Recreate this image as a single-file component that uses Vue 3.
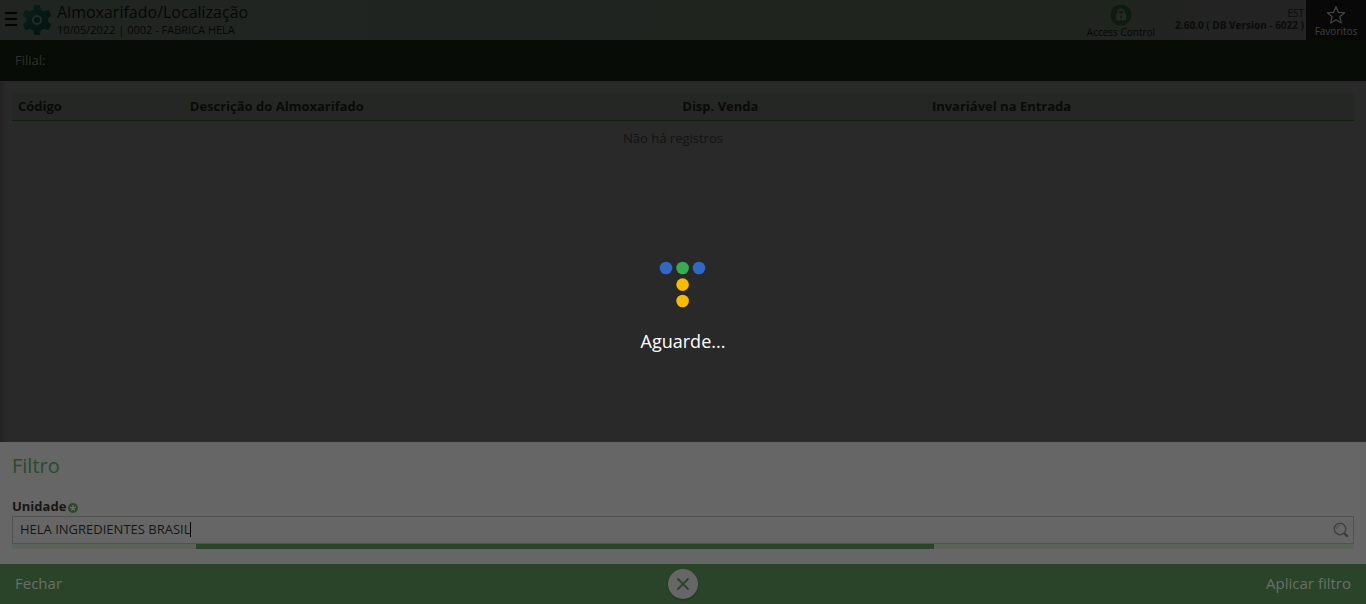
<script setup>
import { ref } from 'vue'

const unit = ref('HELA INGREDIENTES BRASIL')
const columns = [
  { label: 'Código', name: 'code' },
  { label: 'Descrição do Almoxarifado', name: 'description' },
  { label: 'Disp. Venda', name: 'sale' },
  { label: 'Invariável na Entrada', name: 'entry' }
]
</script>

<template>
  <div class="screen">
    <header class="topbar">
      <button class="menu" aria-label="Menu"><i></i><i></i><i></i></button>
      <svg class="gear" viewBox="0 0 28 32" aria-hidden="true">
        <defs>
          <linearGradient id="gearFill" x1="0" y1="0" x2="1" y2="1">
            <stop offset="0" stop-color="#0b1f1a" />
            <stop offset="1" stop-color="#021210" />
          </linearGradient>
        </defs>
        <path
          fill="url(#gearFill)"
          stroke="url(#gearFill)"
          stroke-width="2"
          stroke-linejoin="round"
          d="M12 2h4l1 4 4 2.500 4-1.500 2 4-3 3v4l3 3-2 4-4-1.500-4 2.500-1 4h-4l-1-4-4-2.500-4 1.500-2-4 3-3v-4l-3-3 2-4 4 1.500 4-2.500z"
        />
        <circle cx="14" cy="16" r="4" fill="#061613" stroke="#1f2c28" stroke-width="2" />
      </svg>
      <div class="heading">
        <h1>Almoxarifado/Localização</h1>
        <p>10/05/2022 | 0002 - FABRICA HELA</p>
      </div>
      <button class="access">
        <svg viewBox="0 0 22 22" aria-hidden="true">
          <circle cx="11" cy="11" r="10.500" fill="#0e1c0e" />
          <path d="M8 10V8.500a3 3 0 0 1 6 0V10" fill="none" stroke="#242924" stroke-width="1.800" />
          <rect x="6" y="9.500" width="10" height="7" rx="1" fill="#242924" />
          <path d="M11 11.500v3" stroke="#0e1c0e" stroke-width="1.500" />
        </svg>
        <span>Access Control</span>
      </button>
      <div class="version">
        <span>EST</span>
        <strong>2.60.0 ( DB Version - 6022 )</strong>
      </div>
      <button class="favorites">
        <svg viewBox="0 0 20 20" aria-hidden="true">
          <path
            d="M10 1.500l2.400 5.800 6.100.4-4.700 4 1.500 6.300L10 14.700 4.700 18l1.500-6.300-4.700-4 6.100-.4z"
            fill="none"
            stroke="#454545"
            stroke-width="1.200"
            stroke-linejoin="round"
          />
        </svg>
        <span>Favoritos</span>
      </button>
    </header>

    <div class="branch">Filial:</div>

    <main class="content">
      <table>
        <thead>
          <tr>
            <th v-for="c in columns" :key="c.name" :class="c.name" scope="col">{{ c.label }}</th>
          </tr>
        </thead>
        <tbody>
          <tr>
            <td :colspan="columns.length">Não há registros</td>
          </tr>
        </tbody>
      </table>
    </main>

    <section class="filter">
      <h2>Filtro</h2>
      <label for="unit">
        Unidade
        <svg viewBox="0 0 10 10" aria-hidden="true">
          <circle cx="5" cy="5" r="5" fill="#2a4a29" />
          <path d="M5 5V2M5 5l2.900-.9M5 5l1.800 2.400M5 5L3.200 7.400M5 5l-2.900-.9" stroke="#6a6f6a" stroke-width="1.300" />
        </svg>
      </label>
      <div class="field">
        <input id="unit" v-model="unit" type="text" autocomplete="off" />
        <span class="caret"></span>
        <button class="search" aria-label="Pesquisar">
          <svg viewBox="0 0 16 16" aria-hidden="true">
            <circle cx="7" cy="7" r="5.800" fill="none" stroke="#414141" stroke-width="1.400" />
            <path d="M3.600 7A3.400 3.400 0 0 1 7 3.600" fill="none" stroke="#494949" />
            <path d="M11.200 11.200l3.600 3.600" stroke="#393939" stroke-width="2" />
          </svg>
        </button>
      </div>
      <div class="progress"><div class="bar"></div></div>
    </section>

    <footer class="actions">
      <button class="close">Fechar</button>
      <button class="round" aria-label="Cancelar">
        <svg viewBox="0 0 14 14" aria-hidden="true">
          <path d="M2 2l10 10M12 2L2 12" stroke="#2a4429" stroke-width="1.800" stroke-linecap="round" />
        </svg>
      </button>
      <button class="apply">Aplicar filtro</button>
    </footer>

    <div class="loading" role="status">
      <svg viewBox="0 0 48 48" aria-hidden="true">
        <circle cx="7" cy="7" r="6.300" fill="#2f68c5" />
        <circle cx="23.600" cy="7" r="6.300" fill="#3aaa53" />
        <circle cx="40" cy="7" r="6.300" fill="#2f68c5" />
        <circle cx="23.600" cy="23.600" r="6.300" fill="#f6bb05" />
        <circle cx="23.600" cy="40" r="6.300" fill="#f6bb05" />
      </svg>
      <span>Aguarde...</span>
    </div>
  </div>
</template>

<style>
body {
  margin: 0;
  background: #292929;
}
</style>

<style scoped>
.screen {
  position: relative;
  display: flex;
  flex-direction: column;
  min-height: 100vh;
  font-family: "Open Sans", "Noto Sans", sans-serif;
  font-size: 13px;
  color: #0a0a0a;
  background: linear-gradient(90deg, #222222, #292929 6px);
}
.screen * {
  box-sizing: border-box;
}
button {
  padding: 0;
  border: 0;
  background: none;
  font-family: inherit;
  color: inherit;
}
h1,
h2,
p {
  margin: 0;
  font-weight: 400;
}
svg {
  display: block;
}
.topbar {
  display: flex;
  height: 40px;
  background: linear-gradient(90deg, #212521, #20241f 80%, #232323 90%);
}
.menu {
  display: flex;
  flex-direction: column;
  justify-content: center;
  gap: 4px;
  width: 12px;
  margin-left: 5px;
  padding-bottom: 2px;
}
.menu i {
  height: 2px;
  background: #020302;
}
.gear {
  width: 28px;
  height: 32px;
  margin: 4px 6px 0;
}
.heading {
  flex: 1;
}
.heading h1 {
  font-size: 16px;
  line-height: 24px;
  color: #060706;
}
.heading p {
  font-size: 11px;
  line-height: 11px;
  color: #060706;
}
.access,
.favorites {
  display: flex;
  flex-direction: column;
  align-items: center;
  font-size: 10px;
  line-height: 12px;
}
.access {
  margin-right: 20px;
  padding-top: 4px;
  color: #050605;
}
.access svg {
  width: 22px;
  height: 22px;
}
.version {
  display: flex;
  flex-direction: column;
  align-items: flex-end;
  padding: 7px 2px 0 0;
  font-size: 10px;
  line-height: 12px;
  color: #0a0b0a;
}
.favorites {
  width: 60px;
  padding-top: 5px;
  background: #080808;
  color: #414141;
}
.favorites svg {
  width: 20px;
  height: 20px;
}
.branch {
  height: 41px;
  padding-left: 15px;
  line-height: 41px;
  background: #070c06;
  color: #2e312e;
}
.content {
  flex: 1;
  padding: 12px 12px 0;
}
table {
  width: 100%;
  table-layout: fixed;
  border-spacing: 0;
}
th {
  height: 28px;
  padding: 0 6px 2px;
  background: #242723;
  border-bottom: 1px solid #10200f;
  text-align: left;
}
.code {
  width: 12.8%;
}
.description {
  width: 36.7%;
}
.sale {
  width: 18.6%;
}
td {
  height: 34px;
  padding: 0 20px 0 0;
  text-align: center;
  color: #131313;
}
.filter {
  padding: 12px 12px 15px;
  background: #666666;
}
h2 {
  font-size: 20px;
  line-height: 24px;
  color: #2b4a2a;
}
label {
  display: flex;
  align-items: center;
  gap: 2px;
  margin-top: 20px;
  padding-bottom: 2px;
  font-weight: 700;
  line-height: 16px;
  color: #161616;
}
label svg {
  width: 10px;
  height: 10px;
  margin-top: 4px;
}
.field {
  position: relative;
  display: flex;
  align-items: center;
  height: 28px;
  border: 1px solid #515151;
}
input {
  flex: 1;
  min-width: 0;
  height: 100%;
  padding: 0 7px 2px;
  border: 0;
  outline: 0;
  background: none;
  font: inherit;
  color: #161616;
}
.caret {
  position: absolute;
  left: 177px;
  top: 5px;
  width: 1px;
  height: 15px;
  background: #000000;
}
.search {
  margin-right: 4px;
}
.search svg {
  width: 16px;
  height: 16px;
}
.progress {
  height: 5px;
  background: #5b645a;
}
.bar {
  width: 55%;
  height: 100%;
  margin-left: 13.7%;
  background: #2a4429;
}
.actions {
  display: grid;
  grid-template-columns: 1fr auto 1fr;
  align-items: center;
  height: 40px;
  padding: 0 15px;
  background: #2a4429;
  color: #6a6f6a;
}
.close,
.apply {
  justify-self: start;
  padding-bottom: 2px;
  font-size: 15px;
  line-height: 20px;
}
.apply {
  justify-self: end;
}
.round {
  display: grid;
  place-items: center;
  width: 30px;
  height: 30px;
  border-radius: 50%;
  background: #666666;
  box-shadow: 0 1px 2px #1e321d;
}
.round svg {
  width: 14px;
  height: 14px;
}
.loading {
  position: absolute;
  inset: 0;
  display: flex;
  flex-direction: column;
  align-items: center;
  justify-content: center;
  gap: 20px;
  padding-top: 10px;
  font-size: 18px;
  line-height: 24px;
  color: #ffffff;
  pointer-events: none;
}
.loading svg {
  width: 48px;
  height: 48px;
}
</style>
